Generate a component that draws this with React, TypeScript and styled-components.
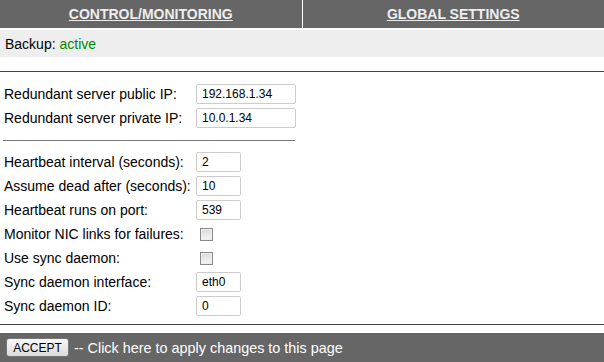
import React from "react";
import styled, { createGlobalStyle } from "styled-components";

const GlobalStyle = createGlobalStyle`
	body {
		margin: 0;
		background: #fff;
		font-family: "Liberation Sans", Arial, sans-serif;
		font-size: 13px;
		color: #000;
	}
`;

const Page = styled.div`
	width: 604px;
	height: 362px;
	display: flex;
	flex-direction: column;
	overflow: hidden;
`;

const TabBar = styled.div`
	display: flex;
	gap: 1px;
	height: 28px;
	background: #fff;
`;

const Tab = styled.a`
	flex: 1;
	display: flex;
	align-items: center;
	justify-content: center;
	background: #666;
	color: #eee;
	font-weight: bold;
	font-size: 14px;
	text-decoration: underline;
`;

const StatusBar = styled.div`
	margin-top: 2px;
	height: 27px;
	display: flex;
	align-items: center;
	padding-left: 5px;
	background: #eee;
	font-size: 14px;
`;

const Active = styled.span`
	color: #080;
`;

const Rule = styled.hr<{ $inset?: boolean }>`
	border: none;
	border-top: 1px solid ${(p) => (p.$inset ? "#777" : "#444")};
	margin: ${(p) => (p.$inset ? "0 309px 0 3px" : "0")};
`;

const Form = styled.div`
	display: flex;
	flex-direction: column;
	padding: 10px 0 0 0;
`;

const Row = styled.div`
	display: flex;
	align-items: center;
	height: 24px;
	padding-left: 4px;
	font-size: 14px;
`;

const Label = styled.span`
	width: 192px;
	white-space: nowrap;
`;

const TextInput = styled.input<{ $wide?: boolean }>`
	box-sizing: border-box;
	width: ${(p) => (p.$wide ? "100px" : "45px")};
	height: 20px;
	border: 1px solid #ccc;
	border-radius: 2px;
	padding: 0 5px;
	font-family: "Liberation Sans", Arial, sans-serif;
	font-size: 12px;
	color: #000;
	outline: none;
`;

const Check = styled.span`
	box-sizing: border-box;
	width: 13px;
	height: 13px;
	margin-left: 4px;
	border: 1px solid #888;
	background: linear-gradient(#dcdcdc, #f4f4f4);
	box-shadow: inset 0 0 0 1px #eee;
`;

const Gap = styled.div<{ $h: number }>`
	height: ${(p) => p.$h}px;
`;

const Footer = styled.div`
	margin-top: auto;
	height: 29px;
	background: #666;
	display: flex;
	align-items: center;
	gap: 5px;
	padding-left: 6px;
	color: #fff;
	font-size: 14.4px;
`;

const Button = styled.button`
	width: 63px;
	height: 19px;
	padding: 0;
	border: 1px solid #777;
	border-radius: 3px;
	background: linear-gradient(#f8f8f8, #dcdcdc);
	font-family: "Liberation Sans", Arial, sans-serif;
	font-size: 12px;
	color: #000;
`;

const ipFields = [
	{ label: "Redundant server public IP:", value: "192.168.1.34" },
	{ label: "Redundant server private IP:", value: "10.0.1.34" },
];

const heartbeatFields: { label: string; value?: string; check?: boolean }[] = [
	{ label: "Heartbeat interval (seconds):", value: "2" },
	{ label: "Assume dead after (seconds):", value: "10" },
	{ label: "Heartbeat runs on port:", value: "539" },
	{ label: "Monitor NIC links for failures:", check: true },
	{ label: "Use sync daemon:", check: true },
	{ label: "Sync daemon interface:", value: "eth0" },
	{ label: "Sync daemon ID:", value: "0" },
];

export default function App() {
	return (
		<Page>
			<GlobalStyle />
			<TabBar>
				<Tab>CONTROL/MONITORING</Tab>
				<Tab>GLOBAL SETTINGS</Tab>
			</TabBar>
			<StatusBar>
				Backup:&nbsp;<Active>active</Active>
			</StatusBar>
			<Gap $h={14} />
			<Rule />
			<Form>
				{ipFields.map((f) => (
					<Row key={f.label}>
						<Label>{f.label}</Label>
						<TextInput $wide defaultValue={f.value} />
					</Row>
				))}
				<Gap $h={10} />
				<Rule $inset />
				<Gap $h={9} />
				{heartbeatFields.map((f) => (
					<Row key={f.label}>
						<Label>{f.label}</Label>
						{f.check ? <Check /> : <TextInput defaultValue={f.value} />}
					</Row>
				))}
			</Form>
			<Gap $h={6} />
			<Rule />
			<Footer>
				<Button>ACCEPT</Button>
				-- Click here to apply changes to this page
			</Footer>
		</Page>
	);
}
